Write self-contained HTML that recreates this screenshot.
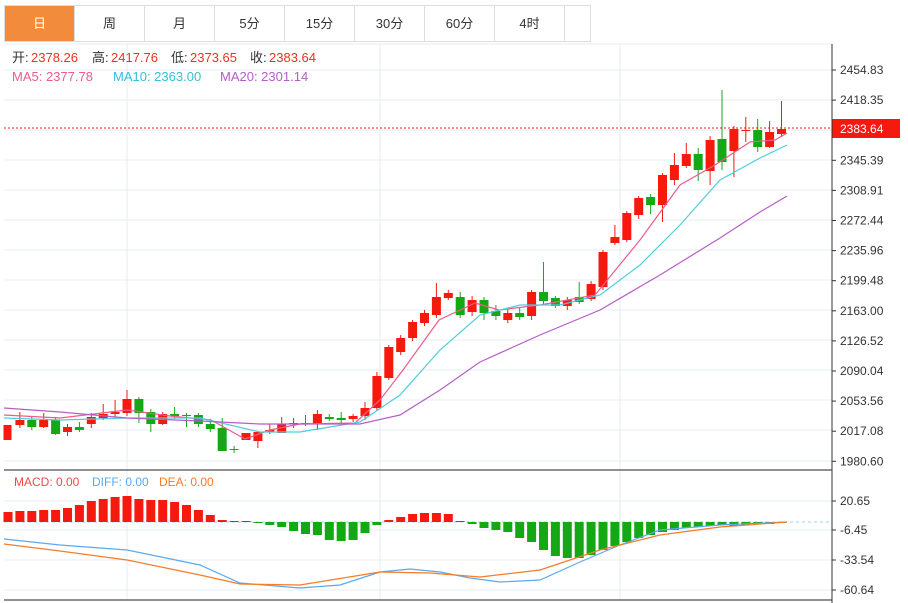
<!DOCTYPE html><html><head><meta charset="utf-8"><style>
body{margin:0;background:#fff;width:908px;height:603px;overflow:hidden;font-family:"Liberation Sans","Noto Sans CJK SC",sans-serif}
.tabs{position:absolute;left:4px;top:5px;height:35px;display:flex;border:1px solid #ddd;border-right:none}
.tabs div{width:69px;height:35px;line-height:35px;text-align:center;font-size:13px;color:#333;border-right:1px solid #ddd}
.tabs div.on{background:#f38b3c;color:#fff}
</style></head><body>
<div class="tabs"><div class="on">日</div><div>周</div><div>月</div><div>5分</div><div>15分</div><div>30分</div><div>60分</div><div>4时</div><div style="width:25px"></div></div>
<svg id="s" width="908" height="603" style="position:absolute;left:0;top:0" font-family="Liberation Sans, Noto Sans CJK SC, sans-serif"></svg>
<script>
var s='';
function L(x1,y1,x2,y2,c,w,d){s+='<line x1="'+x1+'" y1="'+y1+'" x2="'+x2+'" y2="'+y2+'" stroke="'+c+'" stroke-width="'+(w||1)+'"'+(d?' stroke-dasharray="'+d+'"':'')+'/>';}
function T(x,y,t,c,sz){s+='<text x="'+x+'" y="'+y+'" fill="'+c+'" font-size="'+(sz||12)+'">'+t+'</text>';}
var g='#e4ecf3';
[70,100,130,160,190,220,250,280,310,340,370,400,430,461].forEach(function(y){L(4,y,832,y,g)});
[501,530,560,590].forEach(function(y){L(4,y,832,y,g)});
[127,380,620].forEach(function(x){L(x,44,x,600,g)});
L(4,44,832,44,g);
var pl=['2454.83','2418.35','2381.87','2345.39','2308.91','2272.44','2235.96','2199.48','2163.00','2126.52','2090.04','2053.56','2017.08','1980.60'];
pl.forEach(function(p,i){var y=70+i*30.1;if(i==2)return;L(832,y,836,y,'#333');T(840,y+4,p,'#333',12)});
[['20.65',501],['-6.45',530],['-33.54',560],['-60.64',590]].forEach(function(a){L(832,a[1],836,a[1],'#333');T(840,a[1]+4,a[0],'#333',12)});
var R='#f5190e',G='#14a914';
var c=[[425,440,425,440,R],[420,425,412,428,R],[420,427,417,430,G],[420,427,413,428,R],[420,434,417,435,G],[427,432,424,436,R],[427,430,422,432,G],[417,424,413,428,R],[414,418,404,420,R],[412,414,400,417,R],[399,413,390,416,R],[399,413,397,423,G],[412,424,409,432,G],[414,424,412,425,R],[414,416,407,419,G],[415,416,413,427,G],[415,424,413,427,G],[424,429,419,432,G],[428,451,418,451,G],[449,450,446,453,G],[433,440,433,440,R],[432,441,431,448,R],[430,432,424,434,R],[424,433,417,433,R],[423,424,418,428,R],[423,424,415,426,G],[414,424,410,430,R],[417,419,414,421,G],[418,420,412,423,G],[416,419,414,422,R],[408,416,402,420,R],[376,408,372,410,R],[347,378,345,380,R],[338,352,335,355,R],[322,338,320,341,R],[313,323,310,326,R],[297,315,283,318,R],[293,298,290,300,R],[297,315,292,318,G],[300,312,296,316,R],[300,313,297,320,G],[311,316,305,320,G],[313,320,309,323,R],[313,317,307,320,G],[292,316,290,320,R],[292,301,262,305,G],[298,306,296,308,G],[300,306,297,310,R],[297,302,282,304,G],[284,299,281,301,R],[252,287,250,290,R],[237,243,225,245,R],[213,240,211,242,R],[198,215,196,219,R],[197,205,194,214,G],[175,205,173,222,R],[165,180,153,185,R],[154,166,143,168,R],[154,170,148,181,G],[140,171,136,185,R],[139,162,90,170,G],[129,151,126,177,R],[130,131,117,142,R],[130,147,119,152,G],[132,147,121,148,R],[129,134,101,137,R]];
c.forEach(function(k,i){var x=8+i*11.9;L(x,k[2],x,k[3],k[4]);var w=i==0?8:9;s+='<rect x="'+(x-4.5)+'" y="'+k[0]+'" width="'+w+'" height="'+Math.max(1,k[1]-k[0])+'" fill="'+k[4]+'"/>';});
function P(pts,col){s+='<polyline fill="none" stroke="'+col+'" stroke-width="1.2" points="'+pts+'"/>';}
P('4,415 60,418 127,410 170,416 211,420 245,439 270,430 300,424 355,423 380,400 403,370 439,320 475,303 499,310 540,305 595,295 640,240 680,185 715,165 750,142 775,140 787,133','#ef5b8c');
P('4,418 60,420 127,418 200,418 260,432 300,432 360,422 400,395 440,350 480,315 520,305 560,305 600,295 640,265 680,225 720,180 760,158 787,145','#4fcde0');
P('4,408 60,412 127,418 200,421 260,424 360,424 400,415 440,390 480,362 540,335 600,310 660,275 720,238 760,212 787,196','#b65dc8');
L(4,128,832,128,R,1,'2,2');
s+='<rect x="832" y="119" width="68" height="19" fill="'+R+'"/>';T(840,133,'2383.64','#fff',12);
L(4,470,832,470,'#222');L(4,600,832,600,'#222');L(832,44,832,603,'#333');
L(4,522,832,522,'#9fd3f0',1,'3,3');
var m=[512,511,511,510,510,508,505,501,499,497,496,499,500,500,502,505,510,515,520,521,521,522,525,527,531,534,535,540,541,540,533,525,520,517,514,513,513,514,521,524,528,530,532,538,542,550,556,558,558,555,550,546,542,538,535,532,530,528,527,526,525,526,525,524,524,523];
m.forEach(function(v,i){var x=8+i*11.9;var col=v<522?R:G;var y=Math.min(v,522),h=Math.max(1,Math.abs(v-522));s+='<rect x="'+(x-4.5)+'" y="'+y+'" width="9" height="'+h+'" fill="'+col+'"/>';});
P('4,539 60,545 127,550 200,565 240,583 300,588 340,585 380,572 410,569 440,572 470,578 500,582 540,580 580,562 620,545 660,530 720,525 787,522','#5aa9ef');
P('4,544 60,551 127,560 200,575 240,584 300,585 380,572 430,573 480,577 540,570 600,550 660,535 720,527 787,522','#f57c28');
function H(x,lab,val){T(x,62,lab,'#333',13);T(x+19,62,val,'#e8331f',13);}
H(12,'开:','2378.26');H(92,'高:','2417.76');H(171,'低:','2373.65');H(250,'收:','2383.64');
T(12,81,'MA5: 2377.78','#ef5b8c',13);T(113,81,'MA10: 2363.00','#35bfd8',13);T(220,81,'MA20: 2301.14','#b65dc8',13);
T(14,486,'MACD: 0.00','#ee4a4a',12);T(92,486,'DIFF: 0.00','#5aa9ef',12);T(159,486,'DEA: 0.00','#f57c28',12);
document.getElementById('s').innerHTML=s;
</script></body></html>
